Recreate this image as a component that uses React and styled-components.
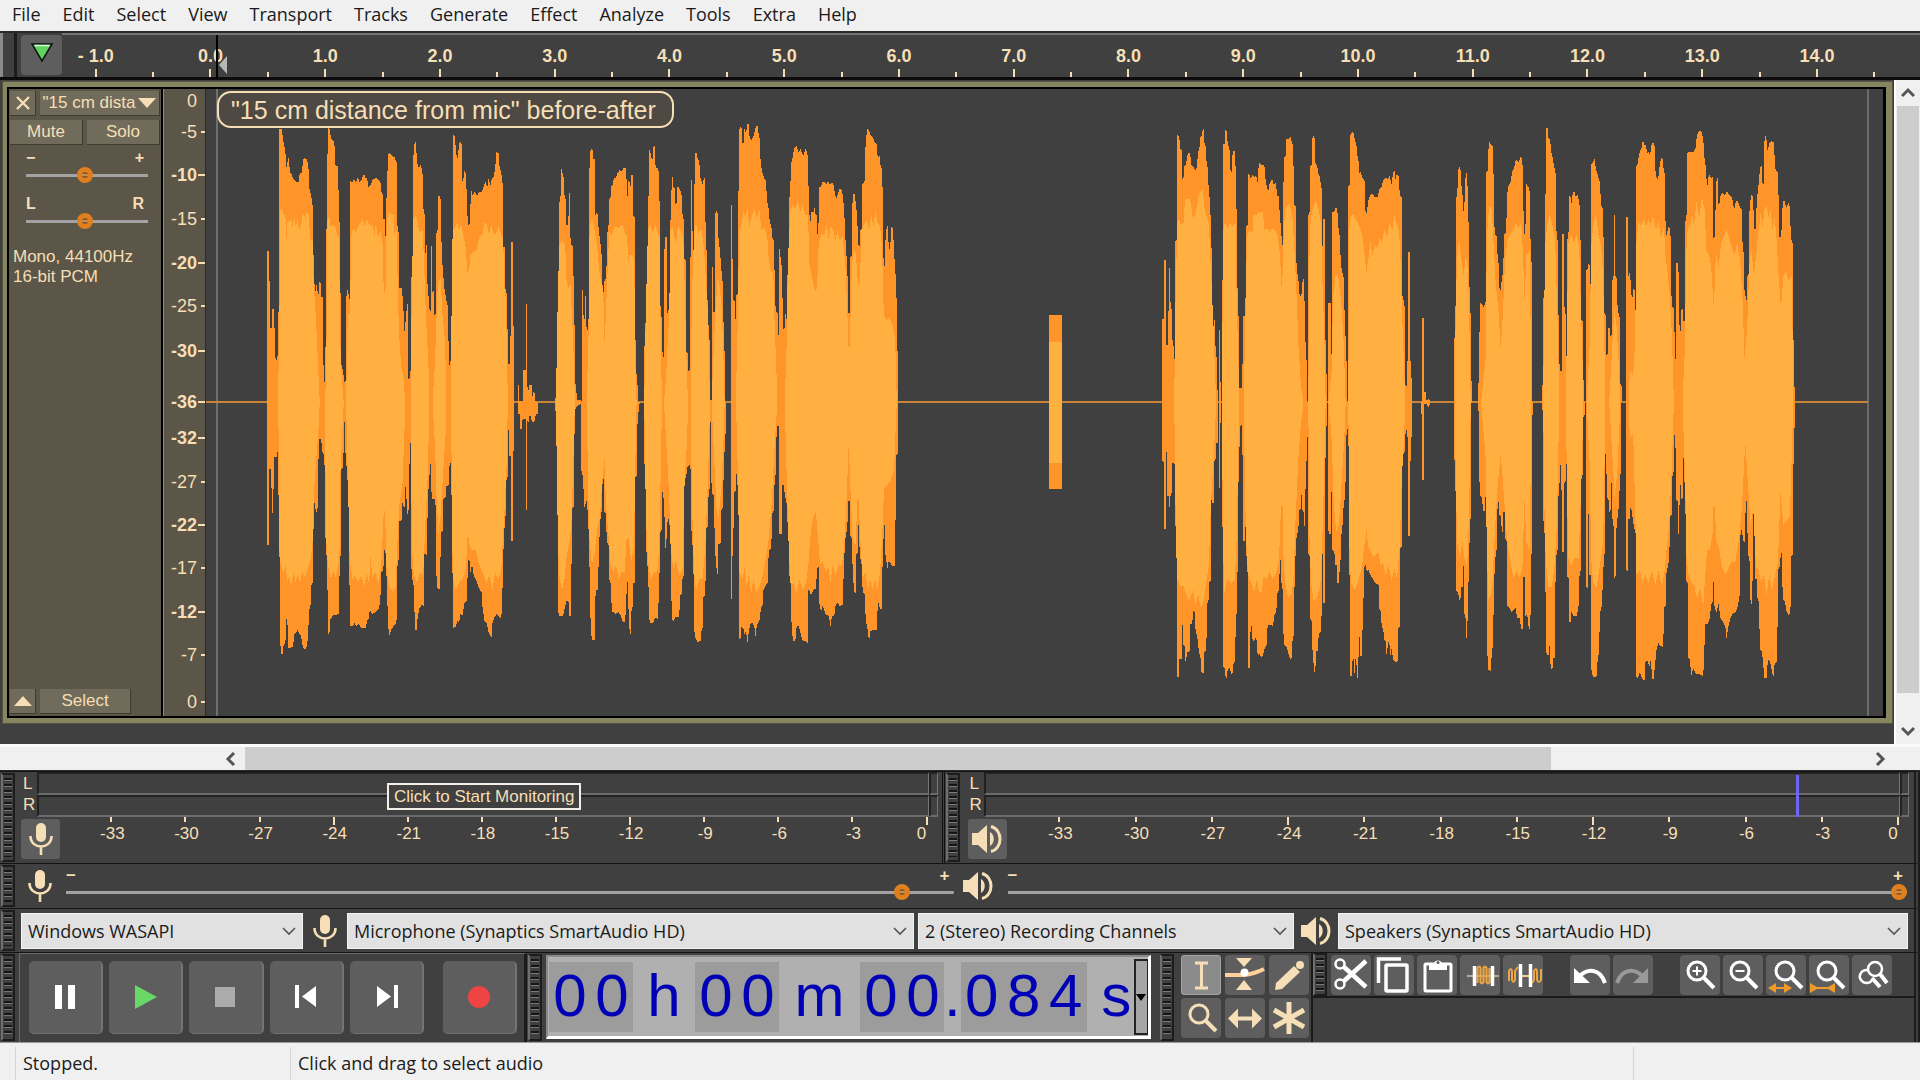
import React from "react";
import styled, { createGlobalStyle, css } from "styled-components";

const C = {
  panel: "#404040",
  dark: "#1c1c1c",
  edge: "#6a6a6a",
  button: "#5e5e5e",
  ink: "#f6dfb6",
  chrome: "#f0f0f0",
  track: "#5b5647",
  trackButton: "#716b5b",
  olive: "#85855f",
  orange: "#ff9428",
  amber: "#ffb040",
};
const SANS = '"Liberation Sans", Arial, sans-serif';
const UI = '"Open Sans", "Noto Sans", sans-serif';

const Global = createGlobalStyle`
  * { box-sizing: border-box; }
  body { margin: 0; background: ${C.panel}; }
  button, select, input { font: inherit; color: inherit; margin: 0; }
`;

const Page = styled.div`
  min-height: 100vh;
  display: flex;
  flex-direction: column;
  background: ${C.panel};
  color: ${C.ink};
  font-family: ${SANS};
  font-size: 17px;
`;

/* ---------- menu ---------- */
const MenuBar = styled.nav`
  display: flex;
  align-items: flex-start;
  gap: 22px;
  height: 31px;
  padding: 0 12px;
  background: ${C.chrome};
  color: #1a1a1a;
  font-family: ${UI};
  font-size: 18px;
`;
const MenuItem = styled.button`
  border: 0;
  padding: 0;
  background: none;
  line-height: 28px;
`;

/* ---------- timeline ---------- */
const Timeline = styled.div`
  display: flex;
  height: 49px;
  border-top: 2px solid #2a2a2a;
  border-bottom: 3px solid #0c0c0c;
`;
const TimelineGrip = styled.div`
  width: 17px;
  border-left: 3px solid #8a8a8a;
  border-right: 3px solid #1c1c1c;
`;
const PinButton = styled.button`
  width: 41px;
  margin: 2px 0 2px 4px;
  border: 0;
  padding: 0;
  border-radius: 4px;
  background: ${C.button};
`;
const Ruler = styled.div`
  position: relative;
  flex: 1;
  display: flex;
  padding: 0 17px 0 5px;
  border-top: 2px solid #747474;
`;
const RulerCell = styled.div`
  flex: 1 1 0;
  min-width: 0;
  display: flex;
  flex-direction: column;
  align-items: center;
  justify-content: flex-end;
  font-size: 18px;
  font-weight: 700;
  line-height: 20px;
  white-space: nowrap;
  &::after {
    content: "";
    width: 2px;
    height: ${(p) => (p.$major ? 8 : 5)}px;
    margin-top: ${(p) => (p.$major ? 3 : 0)}px;
    background: ${C.ink};
  }
`;
const PlayCursor = styled.svg`
  position: absolute;
  left: 154px;
  top: 0;
`;

/* ---------- track ---------- */
const Workspace = styled.div`
  flex: 1;
  display: flex;
`;
const TrackArea = styled.main`
  flex: 1;
  min-width: 0;
  display: flex;
  padding: 2px 2px 21px 3px;
`;
const Track = styled.section`
  flex: 1;
  min-width: 0;
  display: flex;
  border: 4px solid ${C.olive};
  border-width: 5px 6px 5px 4px;
  outline: 1px solid #55553f;
`;
const TrackInner = styled.div`
  flex: 1;
  min-width: 0;
  display: flex;
  border: 2px solid #000;
  border-right-width: 3px;
`;
const TrackPanel = styled.aside`
  width: 154px;
  display: flex;
  flex-direction: column;
  background: ${C.track};
  border-right: 2px solid #000;
  padding: 2px 1px;
`;
const PanelRow = styled.div`
  display: flex;
  gap: 4px;
  margin-bottom: 4px;
  &:last-child { margin-bottom: 0; }
`;
const TrackButton = styled.button`
  flex: ${(p) => p.$flex || "0 0 auto"};
  width: ${(p) => p.$width || "auto"};
  height: 25px;
  border: 0;
  border-right: 1px solid #3f3b30;
  border-bottom: 1px solid #3f3b30;
  padding: 0;
  background: ${C.trackButton};
  line-height: 24px;
  white-space: nowrap;
  display: flex;
  align-items: center;
  justify-content: center;
  gap: 3px;
`;
const SliderBlock = styled.label`
  display: flex;
  flex-direction: column;
  padding: 0 12px 0 16px;
  height: ${(p) => p.$height}px;
  font-weight: 700;
  font-size: 16px;
  line-height: 18px;
`;
const Ends = styled.span`
  display: flex;
  justify-content: space-between;
  padding-right: 4px;
`;
const Range = styled.input.attrs({ type: "range" })`
  appearance: none;
  width: 100%;
  height: 16px;
  background: linear-gradient(#a3a3a3, #a3a3a3) center / 100% 3px no-repeat;
  &::-webkit-slider-thumb {
    appearance: none;
    width: 16px;
    height: 16px;
    border: 5px solid #e07f1e;
    border-radius: 8px;
    background: linear-gradient(#c98c50, #c98c50) center / 6px 2px no-repeat #8c5a2a;
  }
`;
const Format = styled.p`
  flex: 1;
  margin: 0;
  padding: 6px 3px 0;
  line-height: 20px;
`;
const DbScale = styled.div`
  width: 43px;
  display: flex;
  flex-direction: column;
  padding-bottom: 14px;
  background: ${C.track};
  border-left: 1px solid #8f8b7d;
  border-right: 1px solid #2a2a2a;
`;
const DbRow = styled.div`
  flex: 1 1 0;
  min-height: 0;
  display: flex;
  align-items: flex-end;
  justify-content: flex-end;
  font-size: 18px;
  line-height: 20px;
  font-weight: ${(p) => (p.$major ? 700 : 400)};
  span { margin-bottom: -10px; }
  &::after {
    content: "";
    width: ${(p) => (p.$major ? 7 : 4)}px;
    height: 2px;
    margin: 0 0 -1px ${(p) => (p.$major ? 1 : 4)}px;
    background: ${(p) => (p.$tick ? C.ink : "transparent")};
  }
`;
const Canvas = styled.div`
  flex: 1;
  min-width: 0;
  display: flex;
  position: relative;
  background: ${C.panel};
`;
const WaveSvg = styled.svg`
  flex: 1;
  min-width: 0;
  display: block;
`;
const ClipName = styled.div`
  position: absolute;
  left: 11px;
  top: 2px;
  height: 37px;
  padding: 0 16px 0 12px;
  border: 2px solid ${C.ink};
  border-radius: 14px;
  background: #4e4943;
  font-size: 25px;
  line-height: 34px;
  white-space: nowrap;
`;

/* ---------- scroll bars ---------- */
const VScroll = styled.div`
  width: 26px;
  display: flex;
  flex-direction: column;
  align-items: center;
  border-left: 2px solid #fff;
  background: ${C.chrome};
`;
const HScroll = styled.div`
  display: flex;
  height: 27px;
  padding: 0 26px 0 216px;
  border-top: 3px solid #fafafa;
  border-bottom: 1px solid #2a2a2a;
  background: ${C.chrome};
`;
const ScrollButton = styled.button`
  width: ${(p) => p.$w}px;
  height: ${(p) => p.$h}px;
  display: grid;
  place-items: center;
  border: 0;
  padding: 0;
  background: none;
`;
const Thumb = styled.div`
  flex: ${(p) => p.$grow} 1 0;
  min-width: 22px;
  background: #cdcdcd;
`;
const Rest = styled.div`
  flex: ${(p) => p.$grow} 1 0;
`;

/* ---------- toolbars ---------- */
const Bar = styled.div`
  display: flex;
  height: ${(p) => p.$height}px;
  border-top: 1px solid #141414;
  border-right: 6px double #1c1c1c;
`;
const Grip = styled.div`
  flex: 0 0 14px;
  margin: 1px ${(p) => p.$after || 5}px 1px ${(p) => p.$before || 1}px;
  border: 2px solid #1c1c1c;
  border-left-color: #6f6f6f;
  background: ${C.panel};
  padding: 3px 1px;
  &::before {
    content: "";
    display: block;
    height: 100%;
    background: repeating-linear-gradient(#161616 0 2px, #7a7a7a 2px 3px, #404040 3px 6px);
  }
`;
const Dock = styled.div`
  flex: ${(p) => p.$grow} 1 0;
  min-width: 0;
  display: flex;
  border-right: ${(p) => (p.$divide ? "3px double #111" : "0")};
`;
const Meter = styled.div`
  flex: 1;
  min-width: 0;
  display: flex;
  flex-direction: column;
  padding-right: ${(p) => p.$right}px;
`;
const MeterTop = styled.div`
  display: flex;
  height: 45px;
`;
const Channels = styled.div`
  width: 17px;
  padding: 1px 0 0 3px;
  line-height: 21px;
`;
const Levels = styled.div`
  position: relative;
  flex: 1;
  display: grid;
  grid-template-columns: 1fr 9px;
  grid-template-rows: 1fr 1fr;
`;
const Level = styled.div`
  border: 2px solid #222;
  border-right: 1px solid #777;
  border-bottom: 2px solid #6b6b6b;
`;
const Monitor = styled.button`
  position: absolute;
  left: 350px;
  top: 11px;
  height: 27px;
  border: 2px solid #f3efe8;
  padding: 0 5px;
  background: ${C.panel};
  line-height: 22px;
  white-space: nowrap;
`;
const Peak = styled.div`
  position: absolute;
  right: 110px;
  top: 3px;
  bottom: 0;
  width: 3px;
  background: #6c66f2;
`;
const MeterBottom = styled.div`
  flex: 1;
  display: flex;
  padding-right: 10px;
`;
const MeterButton = styled.button`
  width: 39px;
  height: 40px;
  margin: 2px 0 0 1px;
  border: 0;
  padding: 0;
  border-radius: 3px;
  background: ${C.button};
  display: grid;
  place-items: center;
`;
const MeterCell = styled.div`
  flex: ${(p) => p.$grow} 1 0;
  min-width: 0;
  display: flex;
  flex-direction: column;
  align-items: flex-end;
  &::before {
    content: "";
    width: 2px;
    height: ${(p) => (p.$long ? 8 : 5)}px;
    margin-bottom: ${(p) => (p.$long ? 0 : 3)}px;
    background: ${C.ink};
  }
  span {
    width: 48px;
    margin-right: ${(p) => (p.$last ? -18 : -24)}px;
    text-align: center;
    line-height: 17px;
  }
`;
const Mixer = styled.label`
  flex: ${(p) => p.$grow} 1 0;
  min-width: 0;
  display: flex;
  gap: 6px;
  padding-right: ${(p) => p.$right || 0}px;
`;
const IconBox = styled.span`
  flex: 0 0 ${(p) => p.$w}px;
  display: grid;
  place-items: center;
`;
const MixerSlider = styled.span`
  flex: 1;
  min-width: 0;
  padding-top: 4px;
  font-weight: 700;
  line-height: 16px;
  display: flex;
  flex-direction: column;
`;
const Devices = styled.div`
  flex: 1;
  display: flex;
  padding: 4px 6px 3px 1px;
`;
const DeviceField = styled.div`
  flex: ${(p) => p.$grow} 1 0;
  min-width: 0;
  display: grid;
  margin-right: ${(p) => p.$after || 0}px;
  color: #1b1b1b;
  > * { grid-area: 1 / 1; }
  svg { justify-self: end; align-self: center; margin-right: 7px; pointer-events: none; }
`;
const DeviceSelect = styled.select`
  appearance: none;
  min-width: 0;
  border: 1px solid #f4f4f4;
  border-radius: 0;
  padding: 0 24px 1px 6px;
  background: #e1e1e1;
  font-family: ${UI};
  font-size: 18px;
`;
const Transport = styled.div`
  flex: 0 0 508px;
  display: flex;
  gap: 6px;
  padding: 7px 7px 7px 9px;
  border-left: 1px solid ${C.edge};
  border-top: 1px solid ${C.edge};
  border-right: 3px solid #1a1a1a;
`;
const TransportButton = styled.button`
  flex: 1;
  margin-left: ${(p) => (p.$apart ? 13 : 0)}px;
  height: 73px;
  border: 0;
  border-right: 2px solid #747474;
  border-bottom: 1px solid #707070;
  border-radius: 5px;
  padding: 0;
  background: ${C.button};
  display: grid;
  place-items: center;
`;
const TimeBox = styled.div`
  flex: 0 0 605px;
  height: 84px;
  margin-top: 2px;
  display: flex;
  border: 2px solid #8a8a8a;
  border-right: 3px solid #fff;
  border-bottom: 3px solid #fff;
  padding: 5px 0 4px 1px;
  background: #b0b0b0;
`;
const TimeGroup = styled.span`
  flex: 0 0 ${(p) => p.$w}px;
  display: flex;
  padding-left: ${(p) => p.$pad || 0}px;
  background: ${(p) => (p.$digits ? "#9c9c9c" : "transparent")};
  color: #0000b4;
  font-size: 60px;
  line-height: 68px;
  b {
    flex: 1;
    min-width: 0;
    display: flex;
    justify-content: center;
    font-weight: 400;
  }
`;
const TimeMenu = styled.button`
  flex: 1;
  margin: -3px 0;
  border: 2px solid #222;
  border-right-width: 1px;
  padding: 0;
  background: #a6a6a6;
  display: grid;
  place-items: center;
`;
const Tools = styled.div`
  display: grid;
  grid-template-columns: repeat(3, 40px);
  grid-template-rows: repeat(2, 41px);
  gap: 2px 4px;
  padding: 2px 2px 0 0;
`;
const Tool = styled.button`
  width: 40px;
  height: 40px;
  margin-right: ${(p) => (p.$gapAfter ? 24 : 0)}px;
  border: 0;
  border-radius: 4px;
  padding: 0;
  background: ${(p) => (p.$on ? "#8b8b8b" : C.button)};
  ${(p) => p.$on && css`box-shadow: inset 0 0 0 1px #a2a2a2;`}
  svg { display: block; }
`;
const EditSide = styled.div`
  flex: 1;
  min-width: 0;
  border-left: 2px solid #1a1a1a;
`;
const EditBar = styled.div`
  display: flex;
  gap: 3px;
  height: 45px;
  border-bottom: 2px solid #1a1a1a;
`;
const EditGrip = styled(Grip)`
  margin: 0 1px 0 0;
`;
const EditButtons = styled.div`
  display: flex;
  gap: 3px;
  padding-top: 2px;
`;
const StatusBar = styled.footer`
  display: flex;
  height: 39px;
  padding: 4px 0 0 15px;
  border-top: 1px solid #9a9a9a;
  background: ${C.chrome};
  color: #1a1a1a;
  font-family: ${UI};
  font-size: 18px;
  line-height: 32px;
`;
const StatusCell = styled.div`
  flex: ${(p) => p.$flex};
  padding-left: 7px;
  border-left: 1px solid #d4d4d4;
  white-space: nowrap;
`;

/* ---------- waveform data: envelopes as x,y pairs, left to right ---------- */
const WAVES = [
  {
    x: 250, sy: 2.751,
    outerTop: "53,804 53,470 55,387 59,387 59,470 64,470 64,600 69,600 69,548 74,548 74,600 78,600 78,678 85,694 88,555 91,555 91,52 98,52 103,85 109,115 112,160 118,130 123,170 128,178 132,188 140,197 148,200 152,175 158,172 161,150 164,130 172,135 178,150 180,212 187,240 192,270 194,460 199,500 202,480 208,510 213,455 217,515 222,515 224,800 229,690 232,362 234,180 237,50 241,50 246,80 256,88 258,150 266,155 268,212 273,355 276,695 282,720 286,748 290,745 291,520 296,490 300,520 304,515 304,195 310,200 314,190 320,200 326,185 332,200 338,190 345,175 350,190 354,185 357,212 365,205 372,190 380,187 386,190 394,200 397,225 402,235 403,300 408,300 409,358 411,245 414,240 416,125 421,118 428,125 436,130 443,145 443,320 448,320 450,488 458,490 462,530 466,610 470,575 474,535 478,530 478,740 484,735 487,460 491,455 492,135 497,85 501,90 503,140 509,160 515,150 521,180 522,270 526,275 528,405 532,365 536,510 541,510 542,760 546,375 549,370 550,500 556,495 556,565 560,560 560,340 565,335 568,235 574,240 576,340 580,425 585,485 591,520 597,545 599,708 604,690 607,685 608,360 611,355 612,68 616,70 619,95 624,140 628,110 632,85 637,90 639,180 641,210 645,165 650,175 653,235 656,318 661,315 664,260 666,220 670,235 676,225 684,235 690,225 698,225 705,205 710,195 714,215 718,190 724,205 728,190 734,182 738,160 742,115 750,120 751,155 756,170 760,200 762,375 767,378 768,490 774,510 776,695 781,700 782,625 785,620 785,362 790,362 791,590 794,595 795,804 805,804 805,755 808,755 808,800 822,800 822,716 829,716 829,532 832,532 833,755 838,770 841,755 848,755 849,790 853,775 857,780 858,800 866,804",
    outerBottom: "53,804 53,1195 59,1195 59,988 67,988 68,1108 73,1108 74,955 83,955 85,940 88,945 89,1225 92,1230 92,1440 96,1495 100,1500 104,1470 109,1465 112,1400 115,1400 117,1478 124,1478 132,1475 136,1440 142,1435 146,1430 150,1438 156,1445 160,1470 164,1482 172,1480 177,1450 180,1375 185,1360 187,1305 192,1300 194,1080 198,1080 200,1105 204,1105 207,1080 209,905 216,905 220,940 226,950 229,1175 232,1180 233,1315 236,1320 237,1440 241,1440 244,1400 252,1390 262,1388 270,1385 272,1230 275,1225 276,988 281,985 285,910 287,830 290,978 294,980 296,1040 300,1080 301,1305 304,1310 304,1418 312,1418 316,1410 322,1420 330,1412 336,1425 350,1425 354,1405 358,1400 362,1375 370,1385 380,1380 390,1370 394,1340 397,1270 402,1265 405,1235 408,1175 411,1280 414,1285 416,1415 421,1445 426,1430 432,1420 440,1412 443,1400 444,1255 448,1250 450,1130 457,1130 460,1080 466,1095 470,1020 474,1110 478,1110 480,975 484,970 484,895 487,1260 491,1300 495,1310 497,1430 502,1430 505,1400 511,1370 518,1360 524,1365 526,1220 534,1225 536,1045 541,1040 542,830 545,1030 549,1070 556,1070 560,1090 562,1280 565,1315 573,1318 575,1160 580,1160 583,1070 589,1065 592,1035 599,1030 600,980 605,970 606,935 609,1270 612,1280 613,1425 620,1420 624,1405 630,1410 634,1385 640,1390 646,1355 654,1350 656,1235 662,1240 664,1270 669,1250 674,1280 684,1300 692,1320 697,1325 700,1365 706,1405 712,1410 718,1435 727,1450 730,1410 736,1395 742,1385 748,1390 756,1398 759,1360 762,1225 766,1150 769,1120 770,1020 775,1010 777,880 780,880 781,950 786,950 786,1185 791,1185 791,940 795,935 795,804 805,804 805,835 812,835 814,878 819,878 820,850 829,850 829,1100 832,1100 833,855 838,858 842,835 849,858 857,855 860,835 866,835 866,804",
    innerTop: "88,804 89,600 92,520 93,275 98,270 103,285 109,290 112,355 116,300 120,310 126,295 130,325 136,295 140,320 146,300 150,330 156,320 160,290 166,285 168,315 172,280 178,285 184,360 190,350 194,480 200,560 207,700 212,804 228,804 232,700 234,310 240,290 245,325 252,315 258,320 264,345 270,350 273,620 276,700 280,760 284,804 291,804 296,560 303,560 306,350 312,325 320,335 328,320 340,300 348,320 354,300 360,315 372,320 376,350 380,310 386,350 394,335 400,360 404,500 409,505 411,380 414,300 420,280 428,290 434,290 436,340 443,330 446,500 450,620 456,700 464,740 468,804 485,804 488,480 493,300 500,290 506,310 510,335 520,330 524,400 530,560 538,700 541,804 550,804 558,690 561,600 566,480 574,460 580,560 588,640 592,804 606,804 608,380 612,330 618,320 624,310 630,330 636,315 644,350 650,380 654,445 660,440 664,400 672,390 682,385 690,350 700,340 706,310 714,315 720,345 726,310 732,340 740,340 748,320 756,345 762,350 765,480 770,520 774,700 776,804",
    innerBottom: "88,804 90,1190 93,1240 98,1260 104,1270 110,1250 114,1300 120,1280 126,1310 134,1270 140,1300 146,1275 152,1300 160,1270 168,1285 176,1260 184,1240 190,1200 194,1060 200,980 208,880 212,804 228,804 230,1100 233,1220 240,1270 246,1290 252,1265 260,1285 268,1250 272,1200 274,1000 280,880 284,804 291,804 296,1000 302,1240 310,1290 318,1280 326,1300 336,1280 346,1310 352,1275 360,1300 364,1230 370,1285 378,1270 388,1300 396,1260 404,1105 408,1100 412,1260 420,1310 430,1325 440,1310 444,1200 450,1090 460,1030 466,890 468,804 485,804 488,1190 494,1280 504,1300 512,1270 522,1280 528,1150 536,1000 541,804 550,804 558,930 562,1060 568,1160 574,1120 582,1000 590,880 592,804 606,804 609,1180 612,1290 620,1320 630,1300 640,1290 650,1260 656,1160 662,1200 670,1210 680,1210 690,1250 700,1270 712,1300 720,1280 730,1320 738,1270 746,1290 756,1270 760,1200 766,1100 772,980 776,804",
  },
  {
    x: 550, sy: 2.751,
    outerTop: "18,804 20,775 25,775 26,480 30,475 31,240 34,235 35,162 39,165 41,180 45,190 46,240 49,245 51,318 55,315 58,290 59,228 63,228 64,370 70,375 71,455 75,455 76,610 78,615 79,775 83,780 84,798 94,798 95,804 97,804 97,495 102,495 103,575 107,575 108,510 111,510 112,608 116,605 117,575 120,570 121,112 124,112 126,108 130,110 132,135 136,135 137,300 140,282 145,285 147,305 149,345 153,350 155,395 159,400 160,500 164,500 165,470 169,465 170,430 174,425 175,320 179,315 180,245 184,240 185,212 190,205 194,188 200,185 205,172 212,165 218,170 221,160 226,158 231,160 233,235 237,238 238,185 244,210 245,215 246,180 250,180 252,290 257,295 258,630 261,635 262,752 265,755 266,800 270,804 284,804 285,650 288,645 290,490 294,490 296,240 299,235 299,110 303,108 305,132 310,135 313,100 317,98 319,160 325,158 328,170 330,250 332,252 333,450 334,570 338,570 340,680 344,680 344,382 347,380 348,348 352,348 353,555 357,560 359,535 361,530 362,305 366,300 367,190 370,185 372,210 376,215 378,258 382,255 383,210 388,212 394,222 398,238 400,295 403,300 405,410 410,412 411,665 415,668 416,718 421,715 421,405 426,402 426,192 429,192 430,400 434,400 435,205 438,200 438,118 442,118 445,135 450,140 453,185 460,205 464,187 468,190 469,380 472,385 473,522 477,525 478,630 482,635 483,798 487,798 487,432 491,432 492,555 496,555 497,290 501,275 505,285 506,340 510,370 514,410 519,470 522,475 523,655 526,665 528,804 544,804 544,260 549,260 550,520 556,525 556,575 560,575 561,510 566,505 567,480 568,60 573,45 578,50 579,92 583,92 585,50 590,65 594,38 598,40 600,70 605,85 612,72 616,60 620,42 626,45 627,60 632,85 634,150 640,175 646,190 651,195 652,245 658,270 661,305 667,325 670,355 675,360 676,520 681,555 686,560 687,618 690,615 690,382 693,382 694,425 699,430 700,605 706,600 706,560 711,560 712,590 714,455 718,450 720,240 723,238 724,150 730,130 734,105 742,100 748,118 753,105 758,120 763,125 768,108 772,112 776,130 778,240 782,318 786,280 792,282 795,268 798,285 802,290 803,340 807,340 809,210 815,212 818,198 826,198 832,205 836,192 840,205 848,200 852,205 858,235 862,242 867,225 872,215 878,220 884,270 888,350 894,440 897,558 902,558 902,405 907,400 908,268 912,232 916,232 920,262 923,290 927,372 931,375 933,330 937,325 938,205 946,195 948,105 953,52 959,55 963,68 970,75 976,90 982,95 985,130 991,125 994,160 999,160 1000,320 1003,430 1007,428 1008,360 1012,320 1016,320 1018,385 1022,382 1026,322 1030,325 1034,380 1037,450 1041,455 1042,660 1045,665 1046,804",
    outerBottom: "18,804 20,855 25,858 26,1380 32,1392 42,1390 46,1370 52,1350 53,1270 54,1350 59,1355 60,1392 64,1392 65,1250 68,1245 69,1095 74,1090 76,880 79,820 84,815 94,808 97,1000 102,1005 104,1090 108,1095 110,1070 114,1080 117,1150 120,1155 122,1395 126,1400 127,1455 136,1458 137,1350 141,1320 145,1320 146,1260 150,1255 151,1160 155,1110 159,1100 160,1015 164,1015 165,1105 170,1110 173,1190 178,1195 180,1290 184,1300 186,1350 190,1380 200,1385 208,1380 214,1390 220,1405 226,1408 230,1380 233,1300 237,1295 238,1395 242,1440 245,1440 247,1370 250,1365 252,1300 257,1300 258,1010 262,1005 263,910 266,830 270,832 271,804 284,804 286,1000 290,1010 292,1245 297,1260 299,1395 304,1412 312,1410 317,1395 327,1400 329,1275 332,1270 333,1160 337,1155 338,945 340,1065 345,1070 347,1205 351,1205 353,1135 357,1130 359,1115 362,1160 366,1240 367,1400 374,1405 378,1395 390,1395 392,1335 397,1330 400,1285 404,1280 405,1015 410,1010 415,980 421,975 422,860 424,1010 425,1155 429,1158 431,1270 434,1280 435,1430 438,1450 445,1462 455,1460 457,1425 460,1425 462,1340 468,1335 471,1150 476,1145 478,1045 482,1040 484,820 487,1055 494,1060 497,1225 501,1230 502,1275 506,1275 507,1195 514,1190 516,1100 520,1095 521,1020 525,1010 526,895 529,890 529,804 544,804 545,1345 549,1345 550,1150 554,1150 555,1050 560,1045 561,1000 564,1005 566,1095 568,1100 569,1455 574,1450 576,1420 582,1425 585,1440 590,1435 595,1465 598,1435 604,1410 610,1410 615,1420 620,1455 622,1415 630,1405 635,1370 640,1360 642,1320 650,1305 656,1300 658,1210 666,1205 668,1110 674,1100 676,1010 680,1000 682,870 688,870 690,1165 697,1165 699,1030 705,1030 706,1070 711,1065 713,1130 717,1140 719,1280 723,1285 727,1425 731,1460 738,1460 742,1420 748,1418 754,1440 760,1460 768,1460 775,1465 776,1320 780,1320 785,1335 792,1320 800,1315 803,1260 808,1255 810,1355 815,1380 820,1362 828,1385 838,1392 845,1425 847,1390 855,1390 858,1365 864,1355 872,1365 880,1360 884,1240 888,1180 894,1145 896,1075 901,1075 902,1170 908,1180 910,1280 916,1330 920,1325 921,1220 926,1215 927,1140 929,1140 931,1230 936,1240 940,1325 946,1330 949,1400 955,1430 959,1462 963,1432 972,1430 982,1430 984,1380 988,1350 991,1370 997,1372 998,1260 1001,1255 1003,1140 1006,1140 1008,1220 1014,1262 1018,1240 1030,1255 1036,1252 1037,1130 1040,1125 1041,950 1045,945 1046,804",
    innerTop: "20,804 26,500 30,375 36,360 42,360 48,375 52,470 58,490 64,480 70,600 75,720 77,804 112,804 118,620 121,340 126,300 132,310 138,340 143,370 150,440 158,480 162,500 166,640 170,560 176,420 180,335 188,345 196,320 206,325 212,320 220,315 228,340 234,345 236,425 240,400 250,400 255,420 258,690 262,804 285,804 290,540 296,330 304,315 310,340 318,315 326,340 332,350 334,600 338,804 344,804 350,740 360,560 363,330 370,320 380,370 386,320 394,330 402,350 406,480 412,700 416,804 424,804 428,500 435,330 440,310 448,340 456,325 464,380 470,470 476,560 480,720 482,804 487,804 494,640 498,560 505,460 512,490 518,560 523,700 526,804 560,804 562,700 566,560 569,330 576,320 582,280 588,290 595,270 600,320 608,290 616,270 622,300 630,270 636,330 646,325 654,350 658,410 664,440 672,450 676,600 680,680 684,804 706,804 712,640 714,500 718,360 724,275 732,260 738,275 745,250 754,280 760,260 768,290 776,290 780,420 790,470 797,500 803,490 808,370 816,340 824,345 832,315 838,355 844,320 852,330 858,360 864,330 870,355 880,350 888,430 894,560 899,690 903,580 908,420 914,385 920,400 926,485 932,470 936,330 944,315 952,300 958,330 966,290 972,320 978,280 984,310 992,320 998,380 1003,560 1010,580 1020,570 1028,590 1036,620 1040,700 1042,804",
    innerBottom: "20,804 26,1180 30,1280 38,1320 46,1290 52,1230 60,1190 66,1150 72,980 77,804 112,804 118,1080 121,1180 128,1250 136,1220 144,1150 152,1120 160,1010 166,960 170,1080 178,1170 184,1250 192,1270 200,1250 208,1290 216,1270 226,1270 232,1180 238,1180 246,1240 254,1200 258,980 262,804 285,804 290,1120 296,1240 304,1290 314,1270 324,1270 330,1200 336,920 338,804 344,804 350,900 360,1060 364,1200 372,1260 380,1240 390,1280 400,1260 406,1020 414,900 416,804 424,804 428,1070 434,1270 440,1320 450,1290 460,1290 468,1200 474,1060 480,900 482,804 487,804 494,950 502,1100 508,1120 516,1040 524,880 526,804 560,804 566,1010 570,1270 580,1290 586,1260 592,1310 598,1280 606,1330 612,1290 622,1330 630,1310 640,1280 650,1230 658,1180 668,1070 676,920 684,804 706,804 713,1040 718,1200 724,1310 732,1300 742,1330 750,1290 760,1320 770,1300 778,1240 784,1160 792,1120 800,1105 806,1180 812,1250 820,1240 828,1270 836,1255 844,1300 850,1250 858,1280 868,1250 878,1250 886,1180 892,1060 898,920 904,1060 910,1180 918,1200 926,1040 934,1200 940,1290 948,1270 956,1320 962,1290 970,1320 976,1290 984,1320 992,1270 998,1180 1004,1040 1014,1030 1024,1020 1034,990 1042,804",
  },
  {
    x: 1140, sy: 2.751,
    outerTop: "67,804 68,575 73,575 73,412 78,412 79,645 84,645 85,555 88,550 89,435 92,435 93,548 98,548 99,650 103,650 103,685 107,685 107,362 111,358 111,68 116,70 121,85 122,105 126,110 128,190 132,185 134,155 140,150 142,125 147,118 152,120 155,150 160,155 168,165 172,155 175,120 180,100 181,75 187,70 190,50 193,55 195,95 200,100 201,155 204,158 206,205 209,210 211,290 215,290 215,378 218,380 219,605 223,605 223,578 227,578 228,678 233,680 234,804 238,804 238,605 242,605 243,804 246,804 247,470 250,465 251,95 256,92 257,55 262,58 264,90 270,110 273,170 277,172 279,115 285,112 286,155 290,155 292,490 296,490 297,605 299,765 308,765 310,568 315,565 316,520 319,515 320,320 324,315 324,172 330,178 334,190 338,178 344,185 350,180 355,205 357,150 361,145 366,152 374,150 377,185 382,215 388,220 390,200 398,190 402,205 408,200 414,240 418,235 421,310 425,312 426,370 429,370 430,200 433,195 434,130 438,125 439,78 448,80 454,72 456,90 459,95 460,150 463,155 464,262 468,265 469,420 473,425 474,470 478,470 479,505 485,515 488,475 491,462 494,480 496,635 500,640 502,804 506,804 506,290 510,280 511,155 516,150 516,82 522,72 527,80 527,145 533,155 537,180 542,185 543,210 547,215 548,375 551,375 551,300 555,300 556,630 560,635 561,804 565,804 566,530 573,530 575,670 578,670 578,282 586,278 588,268 593,270 595,320 599,330 601,380 606,440 612,460 613,545 617,555 618,690 622,692 623,800 625,800 626,210 630,205 631,72 637,60 641,62 646,85 650,90 652,125 656,130 658,175 662,170 668,185 675,195 676,275 682,285 685,250 692,235 698,230 705,240 714,240 718,220 726,210 730,195 738,185 744,190 750,180 755,205 760,175 764,165 767,190 772,175 778,185 780,235 786,240 787,510 791,512 792,535 796,540 797,755 801,758 802,690 806,690 806,390 811,390 812,690 815,695 816,804 848,804 848,572 853,572 854,775 858,775 860,798 868,795 872,804",
    outerBottom: "67,804 68,965 73,968 73,1153 78,1153 79,940 82,940 83,1060 87,1062 89,1092 92,1092 93,1055 97,1052 98,970 103,970 107,975 108,1190 112,1195 112,1560 117,1560 119,1510 126,1510 127,1415 130,1415 131,1470 136,1475 138,1520 143,1490 150,1488 152,1415 158,1410 162,1375 165,1380 168,1430 174,1455 178,1490 184,1510 185,1545 192,1548 194,1490 200,1485 202,1400 204,1350 208,1345 209,1298 214,1295 215,1070 219,1080 223,1080 224,965 228,960 229,915 234,915 235,804 238,804 238,1040 242,1040 243,804 246,804 247,1145 250,1150 251,1530 257,1535 258,1562 262,1560 264,1540 270,1535 275,1550 280,1548 282,1520 286,1515 287,1450 290,1450 292,1270 296,1268 297,930 300,925 301,870 305,870 308,850 310,1140 311,1185 315,1185 316,1145 320,1150 321,1265 324,1270 325,1535 331,1535 333,1420 336,1420 338,1455 343,1460 347,1450 352,1460 354,1500 360,1495 365,1505 370,1500 375,1480 382,1470 384,1415 392,1415 400,1420 404,1390 410,1380 413,1330 418,1320 421,1240 424,1235 426,1315 430,1320 432,1470 440,1475 445,1490 452,1510 457,1505 459,1450 464,1445 465,1230 469,1225 471,1165 476,1160 478,1100 484,1095 485,1050 488,1100 492,1105 493,1145 497,1145 498,970 501,965 503,825 506,1220 511,1230 512,1400 516,1405 518,1485 521,1490 522,1545 527,1545 529,1490 535,1485 537,1440 543,1435 546,1385 547,1220 550,1220 551,1355 555,1355 556,960 560,955 561,804 565,804 565,1155 569,1165 575,1165 576,960 578,960 578,1210 584,1215 587,1250 591,1250 593,1300 599,1302 600,1240 604,1235 606,1145 610,1140 612,1080 617,1065 619,895 623,890 626,810 628,1275 631,1280 632,1555 636,1555 638,1515 642,1510 644,1555 647,1510 650,1515 652,1562 656,1560 657,1450 661,1450 661,1500 666,1500 668,1430 671,1420 672,1260 678,1250 682,1275 685,1260 690,1275 700,1290 706,1300 717,1305 719,1370 724,1380 726,1420 731,1430 733,1455 738,1460 739,1495 743,1495 744,1460 749,1465 752,1500 756,1480 760,1510 767,1518 774,1515 776,1425 780,1420 782,1205 787,1200 788,950 795,940 798,880 803,880 805,970 806,1170 811,1170 811,965 815,965 816,804 844,804 845,835 848,835 848,1018 853,1018 854,808 862,808 864,818 868,816 872,804",
    innerTop: "104,804 107,560 111,400 112,310 118,300 124,315 132,310 136,250 142,245 148,240 154,260 160,300 166,290 172,265 178,230 184,225 190,220 194,265 200,290 208,310 211,380 216,480 222,600 226,720 230,804 247,804 249,550 252,310 258,315 264,325 270,310 278,320 288,310 291,520 296,680 299,804 312,804 317,600 321,400 324,340 332,330 338,345 342,290 350,290 358,280 364,285 370,280 374,330 382,325 390,335 398,325 406,330 414,345 421,400 427,510 431,370 436,275 442,265 450,260 458,290 464,380 470,490 476,640 484,760 492,804 506,804 509,420 513,300 520,270 528,250 536,270 544,310 548,460 554,620 558,804 566,804 576,720 580,520 588,450 596,460 604,520 612,640 618,804 626,804 628,330 634,290 642,290 650,300 658,320 664,330 672,370 676,410 680,450 686,410 692,360 698,400 706,370 714,380 720,350 726,365 734,330 742,350 750,310 758,330 764,290 770,310 778,330 782,400 787,560 793,700 797,804",
    innerBottom: "104,804 108,1100 112,1290 118,1300 124,1310 132,1310 140,1330 146,1350 152,1340 160,1320 168,1360 176,1330 184,1370 192,1350 200,1300 208,1250 214,1080 222,960 230,804 247,804 250,1180 254,1330 260,1300 266,1290 276,1300 286,1290 291,1180 296,960 299,804 312,804 317,1080 322,1240 328,1290 336,1300 344,1325 352,1290 358,1325 366,1325 372,1280 380,1290 390,1270 400,1290 410,1270 418,1240 424,1090 429,1090 432,1250 438,1310 446,1340 456,1330 462,1280 468,1120 476,960 484,860 492,804 506,804 509,1160 514,1300 522,1350 532,1340 542,1310 548,1180 554,980 558,804 566,804 576,900 582,1080 590,1160 598,1140 606,1020 614,900 618,804 626,804 629,1200 634,1300 644,1320 654,1300 666,1260 674,1200 680,1155 686,1200 694,1215 702,1230 710,1220 716,1215 722,1250 730,1245 738,1280 746,1250 756,1295 764,1260 772,1290 780,1200 786,1020 793,900 797,804",
  },
  {
    x: 1440, sy: 2.412,
    outerTop: "43,704 45,475 49,470 50,210 53,205 54,150 58,137 62,140 64,180 68,190 69,240 73,245 75,210 78,150 83,152 84,265 87,270 88,425 92,430 93,650 96,655 97,704 116,704 117,535 121,535 122,465 126,468 132,475 138,460 140,150 145,145 147,65 150,80 158,85 161,120 162,260 166,300 171,305 173,345 177,375 179,430 184,435 186,400 190,395 193,300 199,295 201,240 204,185 212,175 217,150 223,140 228,120 237,125 243,110 247,120 250,150 251,240 254,298 257,295 258,175 264,185 269,185 271,310 275,310 276,704 305,704 310,640 310,455 315,450 316,205 320,200 320,43 324,45 325,68 331,70 334,100 339,115 343,138 347,145 349,290 353,295 354,490 357,495 358,610 361,615 362,630 366,628 367,300 372,300 373,475 377,478 378,620 382,615 383,310 386,305 387,210 391,205 395,225 398,205 403,195 408,210 414,205 419,225 420,310 424,315 425,505 429,510 430,650 433,655 434,704 438,704 440,385 444,382 445,370 449,372 450,420 453,420 454,130 458,128 464,118 468,140 473,155 480,175 484,230 489,238 490,305 493,310 494,490 498,495 499,590 503,590 504,525 510,525 511,545 515,545 517,410 521,405 522,252 526,255 527,400 532,410 533,470 537,495 540,500 541,660 545,665 545,704 558,704 559,258 565,258 566,400 571,390 573,430 577,460 580,430 584,435 585,485 588,480 589,135 594,130 596,115 600,100 606,90 609,72 614,85 618,85 622,105 627,100 630,110 636,80 643,78 646,105 647,150 652,168 656,160 660,130 664,115 669,118 672,150 676,155 677,280 681,310 684,280 689,285 692,305 694,440 698,475 703,480 705,600 709,600 709,370 713,370 714,390 718,390 719,530 723,535 725,480 729,478 731,510 735,508 737,255 741,252 742,105 748,100 755,102 762,100 768,90 771,60 780,48 786,55 790,70 795,130 799,135 801,205 804,165 808,155 813,165 818,162 820,310 824,305 825,245 828,240 830,165 835,165 836,240 842,205 848,200 855,205 861,195 868,205 876,210 883,240 888,220 894,218 900,235 905,240 907,310 911,345 914,440 920,458 922,400 926,395 927,260 932,215 936,200 940,215 942,285 948,288 950,230 954,190 957,175 960,140 965,135 967,175 972,178 974,60 979,65 983,100 988,80 996,75 1001,78 1004,110 1007,145 1015,150 1017,305 1024,305 1027,240 1032,212 1038,235 1044,228 1048,220 1052,285 1055,318 1060,322 1061,665 1065,670 1066,704",
    outerBottom: "43,704 45,918 49,920 50,1160 55,1162 58,1180 62,1182 64,1150 69,1150 70,1100 73,1100 74,1215 77,1220 80,1272 83,1272 84,1140 88,1138 90,990 93,985 94,710 97,704 116,704 118,880 122,930 127,935 130,968 136,965 138,915 141,912 142,1300 146,1350 154,1352 156,1300 160,1295 162,1170 166,1080 170,1075 172,970 176,940 178,975 184,980 186,1018 190,1015 191,970 195,968 197,1035 201,1040 203,1195 209,1200 215,1210 222,1205 228,1200 232,1225 240,1225 244,1250 249,1250 251,1125 255,1125 257,1220 262,1215 267,1250 272,1250 273,1075 276,1070 277,780 279,704 305,704 306,722 309,725 310,990 314,995 315,1160 319,1165 320,1310 326,1315 329,1290 333,1348 338,1345 341,1320 345,1320 347,1140 349,1075 353,1070 355,930 359,928 360,710 363,915 367,915 368,1065 372,1065 373,900 377,900 378,850 382,855 383,1125 387,1130 388,1235 392,1235 395,1210 402,1220 410,1220 416,1200 418,1125 422,1120 424,890 428,885 430,740 434,738 435,704 438,704 440,1150 445,1152 446,975 448,975 449,1120 453,1120 455,1350 460,1368 470,1365 473,1330 478,1305 480,1215 486,1195 489,1140 492,1085 494,1080 495,860 498,815 502,935 507,940 509,968 512,968 513,895 516,900 518,985 522,1010 523,1128 527,1128 528,1010 532,1005 534,965 538,960 540,880 544,875 545,704 558,704 560,1110 565,1112 566,985 570,985 572,960 576,965 579,990 584,1010 587,1020 588,1365 594,1370 600,1355 606,1370 614,1375 617,1330 624,1328 628,1345 633,1325 637,1372 641,1372 646,1335 650,1300 656,1285 660,1290 670,1295 673,1200 677,1195 678,1125 684,1100 688,1085 691,980 696,975 698,880 702,870 704,780 706,710 708,940 713,942 714,1022 718,1022 720,870 724,940 728,935 729,840 733,840 735,970 738,975 739,1135 743,1140 744,1320 750,1325 754,1365 760,1345 768,1360 778,1360 790,1365 793,1310 796,1240 804,1240 810,1225 813,1195 818,1185 821,1135 824,1200 830,1210 836,1190 842,1225 850,1235 858,1250 860,1275 864,1250 872,1225 878,1215 888,1210 894,1195 900,1165 902,1010 906,1015 912,1045 916,1035 918,880 921,985 926,1080 930,1090 932,1192 936,1190 938,1130 941,955 944,960 946,1130 950,1130 952,1175 957,1185 960,1300 966,1305 969,1330 974,1370 980,1368 984,1325 990,1330 994,1345 1000,1370 1004,1335 1012,1330 1014,1110 1020,1100 1023,1065 1027,1070 1028,1180 1035,1185 1040,1210 1048,1220 1052,1195 1054,1075 1060,1070 1061,770 1065,765 1066,704",
    innerTop: "45,704 48,480 52,360 58,310 66,370 72,400 78,350 84,380 88,480 93,704 124,704 138,600 140,400 144,260 150,230 156,240 162,330 168,420 176,480 183,580 190,480 196,360 202,320 210,300 220,290 228,270 236,285 244,270 250,350 254,460 260,350 270,340 275,704 310,704 313,480 317,320 322,280 330,250 338,280 346,310 350,420 355,560 358,704 378,704 383,440 386,320 394,300 402,320 410,300 418,330 422,440 428,600 430,704 440,704 450,560 454,330 460,280 468,250 476,300 484,330 490,400 494,580 497,704 508,704 518,560 524,480 530,520 536,600 542,704 566,704 570,630 580,640 586,560 589,330 596,270 604,280 612,260 618,280 626,265 632,280 640,255 648,290 656,270 664,310 672,280 677,350 684,400 690,450 696,540 702,704 728,704 736,560 738,360 744,280 750,285 756,250 762,280 770,220 778,260 786,210 794,240 800,340 808,350 814,380 822,480 828,340 836,380 844,320 852,300 860,290 868,310 876,330 884,350 892,320 900,360 907,440 914,600 922,520 928,380 934,330 942,400 950,340 956,290 962,250 968,280 974,240 980,230 986,260 992,240 998,290 1004,260 1010,310 1016,400 1023,480 1030,400 1038,390 1046,410 1056,400 1060,704",
    innerBottom: "45,704 48,880 52,1040 60,1080 68,1040 74,1080 82,1100 88,980 93,704 124,704 138,840 141,1060 146,1180 152,1170 158,1140 164,1040 172,920 183,830 190,900 198,1000 206,1060 214,1100 222,1130 230,1110 240,1130 248,1100 254,940 260,1040 270,1060 275,704 310,704 314,960 318,1090 326,1150 336,1150 344,1100 350,1020 355,860 358,704 378,704 383,980 386,1080 394,1100 404,1080 416,1080 422,960 428,800 430,704 440,704 450,860 454,1080 460,1140 470,1150 480,1100 490,1040 494,860 497,704 508,704 518,840 524,930 532,880 542,704 566,704 570,790 580,780 586,960 590,1120 600,1110 608,1140 616,1120 626,1140 636,1110 646,1145 656,1110 666,1150 674,1110 680,1060 688,1000 696,860 702,704 728,704 736,900 740,1080 746,1120 756,1140 764,1150 772,1180 780,1150 790,1200 796,1120 802,1060 810,1060 818,1020 822,930 830,1040 838,1060 846,1100 856,1120 864,1110 874,1090 886,1090 896,1040 906,960 916,800 924,900 932,1000 940,960 948,1100 956,1110 964,1140 972,1120 980,1170 988,1120 996,1160 1006,1120 1014,1090 1022,920 1030,1000 1040,990 1050,980 1060,704",
  },
];
const closed = (top, bottom) => `${top} ${bottom.split(" ").reverse().join(" ")}`;

function Waveform() {
  return (
    <WaveSvg viewBox="207 89 1676 627" preserveAspectRatio="none" shapeRendering="crispEdges" aria-label="Waveform">
      <rect x="217" y="89" width="2" height="627" fill="#6f6f6f" />
      <rect x="1867" y="89" width="2" height="627" fill="#6b6b6b" />
      <rect x="207" y="401" width="1661" height="2" fill="#c98439" />
      <rect x="1049" y="315" width="13" height="174" fill={C.orange} />
      <rect x="1049" y="342" width="13" height="121" fill={C.amber} />
      {WAVES.map((w) => (
        <g key={w.x} transform={`translate(${w.x} 110) scale(${1 / 3} ${1 / w.sy})`}>
          <polygon fill={C.orange} points={closed(w.outerTop, w.outerBottom)} />
          <polygon fill={C.amber} points={closed(w.innerTop, w.innerBottom)} />
        </g>
      ))}
    </WaveSvg>
  );
}

/* ---------- icons ---------- */
const Chevron = ({ d, size = 14, color = "#555", w = 3 }) => (
  <svg width={size} height={size} viewBox="0 0 14 14" fill="none" stroke={color} strokeWidth={w}>
    <path d={d} />
  </svg>
);
const Down = () => <Chevron d="M1 4l6 6 6-6" w={1.6} />;
const Mic = () => (
  <svg width="24" height="34" viewBox="0 0 24 34" fill="none" stroke={C.ink} strokeWidth="2.6">
    <rect x="7" y="1" width="10" height="19" rx="5" fill={C.ink} stroke="none" />
    <path d="M1.500 14c0 14 21 14 21 0M12 24v9" />
  </svg>
);
const Speaker = () => (
  <svg width="32" height="30" viewBox="0 0 32 30" fill="none" stroke={C.ink}>
    <path d="M1 9h6l9-8v28l-9-8H1z" fill={C.ink} stroke="none" />
    <path d="M19 8c5 3 5 11 0 14z" fill={C.ink} stroke="none" />
    <path d="M20 2.500c12 3 12 22 0 25" strokeWidth="3" />
  </svg>
);
const Lens = ({ children, x = 17, stroke = "#fff" }) => (
  <>
    <g fill="none" stroke={stroke}>
      <circle cx={x} cy="16" r="9" strokeWidth="3" />
      <path d={`M${x + 7} 23l10 10`} strokeWidth="4" />
    </g>
    {children}
  </>
);
const ICONS = {
  select: <path d="M14 8h13M14 33h13M20.500 8v25" stroke={C.ink} strokeWidth="3" fill="none" />,
  envelope: (
    <>
      <path d="M11 3h16l-8 9zM11 35h16l-8-10z" fill={C.ink} />
      <path d="M0 20h19q10-1 20-6" stroke="#ffd09a" strokeWidth="4" fill="none" />
      <circle cx="19.500" cy="17.500" r="4" fill="#fff" />
    </>
  ),
  draw: (
    <>
      <path d="M6 35l1-7 18-17 6 6-18 17z" fill={C.ink} />
      <circle cx="31" cy="10" r="4" fill={C.ink} />
    </>
  ),
  zoom: <Lens x={18} stroke={C.ink} />,
  shift: <path d="M3 20.500l10-10v8h14v-8l10 10-10 10v-8H13v8z" fill={C.ink} />,
  multi: <path d="M20 4v32M5 12l30 17M35 12L5 29" stroke={C.ink} strokeWidth="5" fill="none" />,
  cut: (
    <g fill="none" stroke="#fff">
      <circle cx="9" cy="9" r="4.500" strokeWidth="2.500" />
      <circle cx="9" cy="29" r="4.500" strokeWidth="2.500" />
      <path d="M13 12l22 20M13 26L35 6" strokeWidth="4.500" />
    </g>
  ),
  copy: (
    <g fill="none" stroke="#fff" strokeWidth="3.500">
      <path d="M4.500 28V4H27" />
      <rect x="12" y="10" width="21" height="26" rx="1" />
    </g>
  ),
  paste: (
    <>
      <rect x="8" y="9" width="26" height="27" rx="1" fill="none" stroke="#fff" strokeWidth="3" />
      <path d="M12 15V8h5a4.500 4.500 0 0 1 8 0h5v7z" fill="#fff" />
      <circle cx="21" cy="7.500" r="1.500" fill={C.button} />
    </>
  ),
  trim: (
    <>
      <path d="M7 21h32" stroke="#d9c6a5" strokeWidth="1.500" />
      <path d="M17.500 28V13q2-3 3 0v14q1.500 3 3 0V13q1.500-3 3 0v14q1.500 3 3 0V13" fill="none" stroke="#eba544" strokeWidth="2.200" />
      <path d="M14.500 11v20M32.500 11v20" stroke="#fff" strokeWidth="3.500" />
    </>
  ),
  silence: (
    <>
      <path d="M6 26V16q2-4 3 0v9q1.500 4 3 0v-9l3-4M29 28l2-3v-9q2-4 3 0v9q1.500 4 4 0V14" fill="none" stroke="#eba544" strokeWidth="2" />
      <path d="M18 21h9" stroke="#f4cf95" strokeWidth="2" />
      <path d="M17.500 9v23M27.500 9v23" stroke="#fff" strokeWidth="3.500" />
    </>
  ),
  undo: (
    <g fill="#fff">
      <path d="M4 13v15h16z" />
      <path d="M9 22c8-9 21-9 26 6" fill="none" stroke="#fff" strokeWidth="4" />
    </g>
  ),
  redo: (
    <g fill="#999">
      <path d="M35 13v15H20z" />
      <path d="M30 22c-8-9-21-9-26 6" fill="none" stroke="#999" strokeWidth="4" />
    </g>
  ),
  zoomIn: <Lens><path d="M12.500 16h9M17 11.500v9" stroke="#fff" strokeWidth="2" /></Lens>,
  zoomOut: <Lens><path d="M12.500 16h9" stroke="#fff" strokeWidth="2" /></Lens>,
  zoomSel: <Lens x={19}><path d="M2 33l8-5v4h8v-4l8 5-8 5v-4h-8v4z" fill="#f09a2c" /></Lens>,
  zoomFit: <Lens x={18}><path d="M1 28v10l7-4h11l7 4V28l-7 4H8z" fill="#f09a2c" /></Lens>,
  zoomToggle: (
    <g fill="none" stroke="#fff">
      <path d="M20 23l8 9M28 19l7 9" strokeWidth="4" />
      <circle cx="23" cy="14" r="7" strokeWidth="2.500" />
      <path d="M15 15c-6 0-9 6-6 10 3 4 9 4 11 0" strokeWidth="2.500" />
    </g>
  ),
};
const TRANSPORT = [
  ["Pause", <path key="p" d="M6 4h7v24H6zM19 4h7v24h-7z" fill="#fff" />],
  ["Play", <path key="p" d="M6 4v24l22-12z" fill="#68d867" />],
  ["Stop", <path key="p" d="M6 6h20v20H6z" fill="#ababab" />],
  ["Skip to Start", <path key="p" d="M5 4h4v23H5zM26 5v21L12 15.500z" fill="#fff" />],
  ["Skip to End", <path key="p" d="M24 4h4v23h-4zM7 5v21l14-10.500z" fill="#fff" />],
  ["Record", <circle key="p" cx="16" cy="16" r="11" fill="#ee4444" />],
];
const TOOLS = [["select", "Selection"], ["envelope", "Envelope"], ["draw", "Draw"], ["zoom", "Zoom"], ["shift", "Time Shift"], ["multi", "Multi-Tool"]];
const EDITS = [["cut", "Cut"], ["copy", "Copy"], ["paste", "Paste"], ["trim", "Trim"], ["silence", "Silence", true], ["undo", "Undo"], ["redo", "Redo", true], ["zoomIn", "Zoom In"], ["zoomOut", "Zoom Out"], ["zoomSel", "Fit Selection"], ["zoomFit", "Fit Project"], ["zoomToggle", "Zoom Toggle"]];
const ToolButton = ({ name, label, on, gapAfter }) => (
  <Tool type="button" aria-label={label} $on={on} $gapAfter={gapAfter}>
    <svg width="40" height="40" viewBox="0 0 40 40">{ICONS[name]}</svg>
  </Tool>
);

const MENUS = ["File", "Edit", "Select", "View", "Transport", "Tracks", "Generate", "Effect", "Analyze", "Tools", "Extra", "Help"];
const SECONDS = Array.from({ length: 32 }, (_, i) => (i - 2) / 2);
const secondLabel = (s) => (s < 0 ? `- ${(-s).toFixed(1)}` : s.toFixed(1));
/* label, distance from the previous mark, bold */
const DB = [["0", 12, false, true], ["-5", 31], ["-10", 43, true], ["-15", 44], ["-20", 44, true], ["-25", 43], ["-30", 44, true], ["-36", 51, true], ["-32", 36, true], ["-27", 44], ["-22", 43, true], ["-17", 43], ["-12", 44, true], ["-7", 43], ["0", 47]];
const LEVELS = [-33, -30, -27, -24, -21, -18, -15, -12, -9, -6, -3, 0];
const TIME = [["00", 84, true], ["h", 62], ["00", 84, true], ["m", 81], ["00", 84, true], [".", 15], ["084", 126, true], ["s", 47, false, 12]];

function MeterDock({ label, grow, gripAfter, first, icon, right, divide, children }) {
  return (
    <Dock $grow={grow} $divide={divide}>
      <Grip $after={gripAfter} />
      <Meter $right={right} aria-label={label}>
        <MeterTop>
          <Channels>L<br />R</Channels>
          <Levels>
            <Level /><Level /><Level /><Level />
            {children}
          </Levels>
        </MeterTop>
        <MeterBottom>
          <MeterButton type="button" aria-label={label}>{icon}</MeterButton>
          {LEVELS.map((v, i) => (
            <MeterCell key={v} $grow={i === 0 ? first : 75} $long={v % 12 === 0} $last={v === 0}>
              <span>{v}</span>
            </MeterCell>
          ))}
        </MeterBottom>
      </Meter>
    </Dock>
  );
}

const Device = ({ label, value, grow, after }) => (
  <DeviceField $grow={grow} $after={after}>
    <DeviceSelect aria-label={label} defaultValue={value}>
      <option>{value}</option>
    </DeviceSelect>
    <Down />
  </DeviceField>
);

export default function App() {
  return (
    <Page>
      <Global />
      <MenuBar>
        {MENUS.map((m) => <MenuItem key={m} type="button">{m}</MenuItem>)}
      </MenuBar>

      <Timeline>
        <TimelineGrip />
        <PinButton type="button" aria-label="Pinned play head">
          <svg width="24" height="22" viewBox="0 0 24 22">
            <path d="M2 2h20L12 19z" fill="#5fd35f" stroke="#111" strokeWidth="1.500" />
            <path d="M4.500 3.500h15" stroke="#d8ffd8" strokeWidth="1.500" />
          </svg>
        </PinButton>
        <Ruler>
          {SECONDS.map((s) => (
            <RulerCell key={s} $major={s % 1 === 0}>{s % 1 === 0 ? secondLabel(s) : ""}</RulerCell>
          ))}
          <PlayCursor width="12" height="44" viewBox="0 0 12 44">
            <path d="M1 0v44" stroke="#000" strokeWidth="2" />
            <path d="M11 21v18L3 30z" fill="#b5b8b5" />
          </PlayCursor>
        </Ruler>
      </Timeline>

      <Workspace>
        <TrackArea>
          <Track>
            <TrackInner>
              <TrackPanel>
                <PanelRow>
                  <TrackButton type="button" aria-label="Close track" $width="26px">
                    <Chevron d="M1 1l12 12M13 1L1 13" color={C.ink} w={2.4} />
                  </TrackButton>
                  <TrackButton type="button" $flex="1">
                    "15 cm dista
                    <svg width="18" height="12" viewBox="0 0 18 12"><path d="M0 1h18l-9 10z" fill={C.ink} /></svg>
                  </TrackButton>
                </PanelRow>
                <PanelRow>
                  <TrackButton type="button" $flex="1">Mute</TrackButton>
                  <TrackButton type="button" $flex="1">Solo</TrackButton>
                </PanelRow>
                <SliderBlock $height={46}>
                  <Ends><span>−</span><span>+</span></Ends>
                  <Range defaultValue="48" aria-label="Gain" />
                </SliderBlock>
                <SliderBlock $height={46}>
                  <Ends><span>L</span><span>R</span></Ends>
                  <Range defaultValue="48" aria-label="Pan" />
                </SliderBlock>
                <Format>Mono, 44100Hz<br />16-bit PCM</Format>
                <PanelRow>
                  <TrackButton type="button" aria-label="Collapse" $width="26px">
                    <svg width="18" height="12" viewBox="0 0 18 12"><path d="M0 11h18L9 1z" fill={C.ink} /></svg>
                  </TrackButton>
                  <TrackButton type="button" $width="91px">Select</TrackButton>
                </PanelRow>
              </TrackPanel>
              <DbScale>
                {DB.map(([text, step, major, noTick], i) => (
                  <DbRow key={i} $major={major} $tick={!noTick} style={{ flexGrow: step }}>
                    <span>{text}</span>
                  </DbRow>
                ))}
              </DbScale>
              <Canvas>
                <Waveform />
                <ClipName>"15 cm distance from mic" before-after</ClipName>
              </Canvas>
            </TrackInner>
          </Track>
        </TrackArea>
        <VScroll>
          <ScrollButton type="button" aria-label="Scroll up" $w={24} $h={26}><Chevron d="M1 10l6-6 6 6" /></ScrollButton>
          <Thumb $grow={587} />
          <Rest $grow={25} />
          <ScrollButton type="button" aria-label="Scroll down" $w={24} $h={26}><Chevron d="M1 4l6 6 6-6" /></ScrollButton>
        </VScroll>
      </Workspace>

      <HScroll>
        <ScrollButton type="button" aria-label="Scroll left" $w={29} $h={23}><Chevron d="M10 1L4 7l6 6" /></ScrollButton>
        <Thumb $grow={1306} />
        <Rest $grow={314} />
        <ScrollButton type="button" aria-label="Scroll right" $w={29} $h={23}><Chevron d="M4 1l6 6-6 6" /></ScrollButton>
      </HScroll>

      <Bar $height={92}>
        <MeterDock label="Recording meter" grow={943} gripAfter={5} first={53} icon={<Mic />} right={4} divide>
          <Monitor type="button">Click to Start Monitoring</Monitor>
        </MeterDock>
        <MeterDock label="Playback meter" grow={971} gripAfter={7} first={53} icon={<Speaker />} right={5}>
          <Peak />
        </MeterDock>
      </Bar>

      <Bar $height={45}>
        <Grip />
        <Mixer $grow={937}>
          <IconBox $w={40}><Mic /></IconBox>
          <MixerSlider>
            <Ends><span>−</span><span>+</span></Ends>
            <Range defaultValue="95" aria-label="Recording volume" />
          </MixerSlider>
        </Mixer>
        <Mixer $grow={957} $right={7}>
          <IconBox $w={48}><Speaker /></IconBox>
          <MixerSlider>
            <Ends><span>−</span><span>+</span></Ends>
            <Range defaultValue="100" aria-label="Playback volume" />
          </MixerSlider>
        </Mixer>
      </Bar>

      <Bar $height={44}>
        <Grip />
        <Devices>
          <Device label="Audio host" value="Windows WASAPI" grow={282} />
          <IconBox $w={44}><Mic /></IconBox>
          <Device label="Recording device" value="Microphone (Synaptics SmartAudio HD)" grow={567} after={4} />
          <Device label="Recording channels" value="2 (Stereo) Recording Channels" grow={376} />
          <IconBox $w={44}><Speaker /></IconBox>
          <Device label="Playback device" value="Speakers (Synaptics SmartAudio HD)" grow={570} />
        </Devices>
      </Bar>

      <Bar $height={90}>
        <Grip $after={4} />
        <Transport>
          {TRANSPORT.map(([label, icon]) => (
            <TransportButton key={label} type="button" aria-label={label} $apart={label === "Record"}>
              <svg width="32" height="32" viewBox="0 0 32 32">{icon}</svg>
            </TransportButton>
          ))}
        </Transport>
        <Grip $after={4} />
        <TimeBox role="group" aria-label="Audio position">
          {TIME.map(([text, w, digits, pad], i) => (
            <TimeGroup key={i} $w={w} $digits={digits} $pad={pad}>
              {[...text].map((ch, j) => <b key={j}>{ch}</b>)}
            </TimeGroup>
          ))}
          <TimeMenu type="button" aria-label="Time format">
            <svg width="10" height="7" viewBox="0 0 10 7"><path d="M0 0h10L5 7z" fill="#000" /></svg>
          </TimeMenu>
        </TimeBox>
        <Grip $before={9} $after={7} />
        <Tools>
          {TOOLS.map(([name, label]) => <ToolButton key={name} name={name} label={label} on={name === "select"} />)}
        </Tools>
        <EditSide>
          <EditBar>
            <EditGrip />
            <EditButtons>
              {EDITS.map(([name, label, gapAfter]) => <ToolButton key={name} name={name} label={label} gapAfter={gapAfter} />)}
            </EditButtons>
          </EditBar>
        </EditSide>
      </Bar>

      <StatusBar>
        <StatusCell $flex="0 0 275px">Stopped.</StatusCell>
        <StatusCell $flex="1">Click and drag to select audio</StatusCell>
        <StatusCell $flex="0 0 287px" />
      </StatusBar>
    </Page>
  );
}
